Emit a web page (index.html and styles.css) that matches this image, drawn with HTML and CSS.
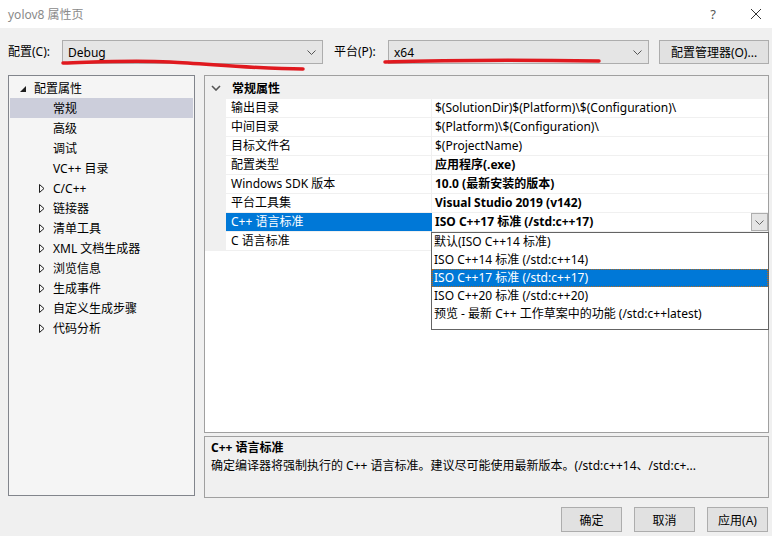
FILE: index.html
```html
<!DOCTYPE html>
<html lang="zh-CN">
<head>
<meta charset="utf-8">
<title>yolov8 属性页</title>
<link rel="stylesheet" href="styles.css">
</head>
<body>
<div class="window">
  <div class="titlebar">
    <span class="title">yolov8 属性页</span>
    <div class="tb-buttons">
      <span class="help">?</span>
      <svg class="close" width="12" height="12" viewBox="0 0 12 12"><path d="M1 1 L11 11 M11 1 L1 11" stroke="#333" stroke-width="1" fill="none"/></svg>
    </div>
  </div>

  <div class="toolbar">
    <span class="lbl">配置(C):</span>
    <div class="combo">
      <span class="combo-text">Debug</span>
      <svg class="chev" width="9" height="5" viewBox="0 0 9 5"><path d="M0.5 0.5 L4.5 4.5 L8.5 0.5" stroke="#555" fill="none"/></svg>
    </div>
    <span class="lbl lbl-platform">平台(P):</span>
    <div class="combo">
      <span class="combo-text">x64</span>
      <svg class="chev" width="9" height="5" viewBox="0 0 9 5"><path d="M0.5 0.5 L4.5 4.5 L8.5 0.5" stroke="#555" fill="none"/></svg>
    </div>
    <button class="btn btn-manager">配置管理器(O)...</button>
  </div>

  <div class="main">
    <div class="tree">
      <div class="tree-row level0">
        <svg class="tri-open" width="6" height="6" viewBox="0 0 6 6"><path d="M6 0 L6 6 L0 6 Z" fill="#1e1e1e"/></svg>
        <span>配置属性</span>
      </div>
      <div class="tree-row level1 selected"><span>常规</span></div>
      <div class="tree-row level1"><span>高级</span></div>
      <div class="tree-row level1"><span>调试</span></div>
      <div class="tree-row level1"><span>VC++ 目录</span></div>
      <div class="tree-row level1 has-children"><svg class="tri" width="6" height="9" viewBox="0 0 6 9"><path d="M0.5 0.5 L5 4.5 L0.5 8.5 Z" fill="none" stroke="#1e1e1e"/></svg><span>C/C++</span></div>
      <div class="tree-row level1 has-children"><svg class="tri" width="6" height="9" viewBox="0 0 6 9"><path d="M0.5 0.5 L5 4.5 L0.5 8.5 Z" fill="none" stroke="#1e1e1e"/></svg><span>链接器</span></div>
      <div class="tree-row level1 has-children"><svg class="tri" width="6" height="9" viewBox="0 0 6 9"><path d="M0.5 0.5 L5 4.5 L0.5 8.5 Z" fill="none" stroke="#1e1e1e"/></svg><span>清单工具</span></div>
      <div class="tree-row level1 has-children"><svg class="tri" width="6" height="9" viewBox="0 0 6 9"><path d="M0.5 0.5 L5 4.5 L0.5 8.5 Z" fill="none" stroke="#1e1e1e"/></svg><span>XML 文档生成器</span></div>
      <div class="tree-row level1 has-children"><svg class="tri" width="6" height="9" viewBox="0 0 6 9"><path d="M0.5 0.5 L5 4.5 L0.5 8.5 Z" fill="none" stroke="#1e1e1e"/></svg><span>浏览信息</span></div>
      <div class="tree-row level1 has-children"><svg class="tri" width="6" height="9" viewBox="0 0 6 9"><path d="M0.5 0.5 L5 4.5 L0.5 8.5 Z" fill="none" stroke="#1e1e1e"/></svg><span>生成事件</span></div>
      <div class="tree-row level1 has-children"><svg class="tri" width="6" height="9" viewBox="0 0 6 9"><path d="M0.5 0.5 L5 4.5 L0.5 8.5 Z" fill="none" stroke="#1e1e1e"/></svg><span>自定义生成步骤</span></div>
      <div class="tree-row level1 has-children"><svg class="tri" width="6" height="9" viewBox="0 0 6 9"><path d="M0.5 0.5 L5 4.5 L0.5 8.5 Z" fill="none" stroke="#1e1e1e"/></svg><span>代码分析</span></div>
    </div>

    <div class="right">
      <div class="grid">
        <div class="grid-header">
          <svg class="hdr-chev" width="10" height="6" viewBox="0 0 10 6"><path d="M1 1 L5 5 L9 1" stroke="#555" stroke-width="1.6" fill="none"/></svg>
          <span>常规属性</span>
        </div>
        <div class="prow"><div class="gutter"></div><div class="pname">输出目录</div><div class="pval">$(SolutionDir)$(Platform)\$(Configuration)\</div></div>
        <div class="prow"><div class="gutter"></div><div class="pname">中间目录</div><div class="pval">$(Platform)\$(Configuration)\</div></div>
        <div class="prow"><div class="gutter"></div><div class="pname">目标文件名</div><div class="pval">$(ProjectName)</div></div>
        <div class="prow"><div class="gutter"></div><div class="pname">配置类型</div><div class="pval bold">应用程序(.exe)</div></div>
        <div class="prow"><div class="gutter"></div><div class="pname">Windows SDK 版本</div><div class="pval bold">10.0 (最新安装的版本)</div></div>
        <div class="prow"><div class="gutter"></div><div class="pname">平台工具集</div><div class="pval bold">Visual Studio 2019 (v142)</div></div>
        <div class="prow active"><div class="gutter"></div><div class="pname">C++ 语言标准</div><div class="pval bold"><span>ISO C++17 标准 (/std:c++17)</span>
          <span class="drop-btn"><svg width="9" height="5" viewBox="0 0 9 5"><path d="M0.5 0.5 L4.5 4.5 L8.5 0.5" stroke="#666" fill="none"/></svg></span></div></div>
        <div class="prow"><div class="gutter"></div><div class="pname">C 语言标准</div><div class="pval"></div></div>

        <div class="droplist">
          <div class="ditem">默认(ISO C++14 标准)</div>
          <div class="ditem">ISO C++14 标准 (/std:c++14)</div>
          <div class="ditem dsel">ISO C++17 标准 (/std:c++17)</div>
          <div class="ditem">ISO C++20 标准 (/std:c++20)</div>
          <div class="ditem">预览 - 最新 C++ 工作草案中的功能 (/std:c++latest)</div>
        </div>
      </div>
      <div class="desc">
        <div class="desc-title">C++ 语言标准</div>
        <div class="desc-text">确定编译器将强制执行的 C++ 语言标准。建议尽可能使用最新版本。(/std:c++14、/std:c+...</div>
      </div>
    </div>
  </div>

  <div class="footer">
    <button class="btn btn-foot">确定</button>
    <button class="btn btn-foot">取消</button>
    <button class="btn btn-foot">应用(A)</button>
  </div>

  <svg class="annot" width="772" height="536" viewBox="0 0 772 536">
    <path d="M63 63 C 100 62, 130 60, 170 62 S 260 69, 303 69" stroke="#e0191f" stroke-width="3.5" fill="none" stroke-linecap="round"/>
    <path d="M385 62 C 450 60, 530 60, 599 61" stroke="#e0191f" stroke-width="3.5" fill="none" stroke-linecap="round"/>
  </svg>
</div>
</body>
</html>
```

FILE: styles.css
```css
* { box-sizing: border-box; }
html, body { margin: 0; padding: 0; }
body {
  width: 772px;
  height: 536px;
  overflow: hidden;
  background: #f0f0f0;
  font-family: "Noto Sans", "Noto Sans CJK SC", sans-serif;
  font-size: 12px;
  color: #000;
}
.window { position: relative; width: 772px; height: 536px; }

.titlebar {
  height: 28px;
  background: #fff;
  display: flex;
  align-items: center;
  justify-content: space-between;
  padding: 0 10px 0 8px;
}
.title { color: #8a8a8a; font-size: 12px; }
.tb-buttons { display: flex; align-items: center; gap: 34px; }
.help { color: #555; font-size: 13px; }

.toolbar {
  display: flex;
  align-items: flex-start;
  padding: 12px 0 0 8px;
  height: 36px;
}
.lbl { width: 54px; line-height: 24px; }
.lbl-platform { margin-left: 11px; }
.combo {
  width: 261px;
  height: 24px;
  background: #e5e5e5;
  border: 1px solid #adadad;
  display: flex;
  align-items: center;
  justify-content: space-between;
  padding: 0 6px 0 5px;
}
.btn {
  font: inherit;
  color: #000;
  background: #e1e1e1;
  border: 1px solid #adadad;
  height: 24px;
  padding: 0;
}
.btn-manager { margin-left: 10px; width: 110px; }

.main {
  display: flex;
  gap: 9px;
  padding: 11px 0 0 8px;
  height: 434px;
}
.tree {
  width: 187px;
  height: 421px;
  border: 1px solid #82858c;
  background: #f5f5f5;
  padding: 2px 1px;
}
.tree-row {
  height: 20px;
  display: flex;
  align-items: center;
  white-space: nowrap;
}
.tree-row.level0 { padding-left: 10px; }
.tree-row.level0 span { margin-left: 8px; }
.tree-row.level1 { padding-left: 43px; }
.tree-row.has-children { padding-left: 29px; }
.tree-row.has-children span { margin-left: 8px; }
.tree-row.selected { background: #cccedb; }
.tri-open { margin-top: 1px; }

.right { width: 565px; display: flex; flex-direction: column; gap: 3px; }
.grid {
  position: relative;
  height: 358px;
  border: 1px solid #a0a0a0;
  background: #fff;
}
.grid-header {
  height: 23px;
  background: #f0f0f0;
  display: flex;
  align-items: center;
  padding-left: 6px;
  font-weight: bold;
}
.grid-header span { margin-left: 11px; }
.prow {
  display: grid;
  grid-template-columns: 21px 206px 1fr;
  height: 19px;
}
.gutter { background: #f0f0f0; }
.pname {
  padding-left: 5px;
  line-height: 18px;
  border-bottom: 1px solid #f0f0f0;
  border-right: 1px solid #f0f0f0;
  white-space: nowrap;
}
.pval {
  padding-left: 3px;
  line-height: 18px;
  border-bottom: 1px solid #f0f0f0;
  white-space: nowrap;
  overflow: hidden;
  display: flex;
  justify-content: space-between;
}
.bold { font-weight: bold; }
.prow.active .pname { background: #0078d7; color: #fff; border-right-color: #0078d7; }
.drop-btn {
  width: 17px;
  height: 18px;
  background: #e5e5e5;
  border: 1px solid #adadad;
  display: flex;
  align-items: center;
  justify-content: center;
}
.droplist {
  position: absolute;
  left: 226px;
  top: 156px;
  width: 338px;
  height: 98px;
  background: #fff;
  border: 1px solid #646464;
}
.ditem {
  height: 18px;
  line-height: 18px;
  padding-left: 2px;
  white-space: nowrap;
}
.ditem.dsel {
  background: #0078d7;
  color: #fff;
  outline: 1px dotted #b46a1e;
  outline-offset: -1px;
}
.desc {
  height: 62px;
  border: 1px solid #a0a0a0;
  background: #f0f0f0;
  padding: 2px 6px;
  line-height: 18px;
}
.desc-title { font-weight: bold; }
.desc-text { white-space: nowrap; overflow: hidden; }

.footer {
  display: flex;
  justify-content: flex-end;
  gap: 12px;
  padding: 9px 4px 0 0;
}
.btn-foot { width: 61px; height: 25px; }

.annot { position: absolute; left: 0; top: 0; pointer-events: none; }
```
